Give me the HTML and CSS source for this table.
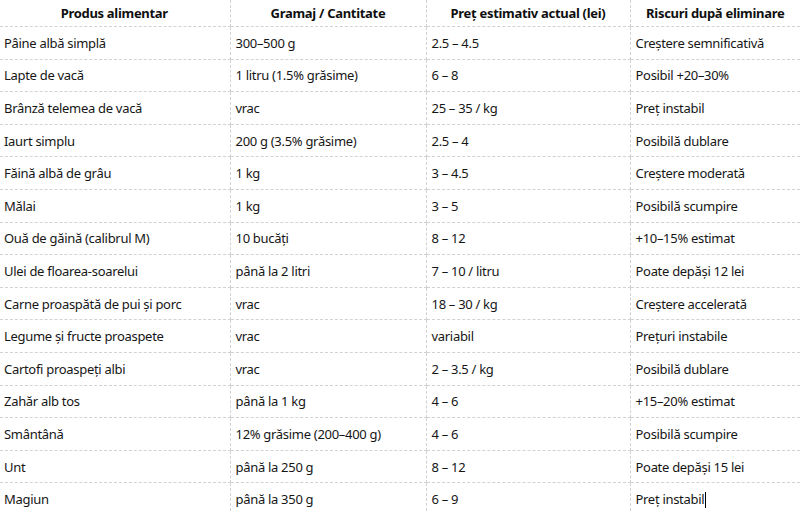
FILE: index.html
```html
<!DOCTYPE html>
<html lang="ro">
<head>
<meta charset="utf-8">
<title>Produse alimentare</title>
<link rel="stylesheet" href="styles.css">
</head>
<body>
<table class="grid">
  <colgroup>
    <col class="c1"><col class="c2"><col class="c3"><col class="c4">
  </colgroup>
  <thead>
    <tr><th>Produs alimentar</th><th>Gramaj / Cantitate</th><th>Preț estimativ actual (lei)</th><th>Riscuri după eliminare</th></tr>
  </thead>
  <tbody>
    <tr><td>Pâine albă simplă</td><td>300–500 g</td><td>2.5 – 4.5</td><td>Creștere semnificativă</td></tr>
    <tr><td>Lapte de vacă</td><td>1 litru (1.5% grăsime)</td><td>6 – 8</td><td>Posibil +20–30%</td></tr>
    <tr><td>Brânză telemea de vacă</td><td>vrac</td><td>25 – 35 / kg</td><td>Preț instabil</td></tr>
    <tr><td>Iaurt simplu</td><td>200 g (3.5% grăsime)</td><td>2.5 – 4</td><td>Posibilă dublare</td></tr>
    <tr><td>Făină albă de grâu</td><td>1 kg</td><td>3 – 4.5</td><td>Creștere moderată</td></tr>
    <tr><td>Mălai</td><td>1 kg</td><td>3 – 5</td><td>Posibilă scumpire</td></tr>
    <tr><td>Ouă de găină (calibrul M)</td><td>10 bucăți</td><td>8 – 12</td><td>+10–15% estimat</td></tr>
    <tr><td>Ulei de floarea-soarelui</td><td>până la 2 litri</td><td>7 – 10 / litru</td><td>Poate depăși 12 lei</td></tr>
    <tr><td>Carne proaspătă de pui și porc</td><td>vrac</td><td>18 – 30 / kg</td><td>Creștere accelerată</td></tr>
    <tr><td>Legume și fructe proaspete</td><td>vrac</td><td>variabil</td><td>Prețuri instabile</td></tr>
    <tr><td>Cartofi proaspeți albi</td><td>vrac</td><td>2 – 3.5 / kg</td><td>Posibilă dublare</td></tr>
    <tr><td>Zahăr alb tos</td><td>până la 1 kg</td><td>4 – 6</td><td>+15–20% estimat</td></tr>
    <tr><td>Smântână</td><td>12% grăsime (200–400 g)</td><td>4 – 6</td><td>Posibilă scumpire</td></tr>
    <tr><td>Unt</td><td>până la 250 g</td><td>8 – 12</td><td>Poate depăși 15 lei</td></tr>
    <tr><td>Magiun</td><td>până la 350 g</td><td>6 – 9</td><td>Preț instabil<span class="caret"></span></td></tr>
  </tbody>
</table>
</body>
</html>
```

FILE: styles.css
```css
html, body {
  margin: 0;
  padding: 0;
  background: #ffffff;
}
body {
  font-family: "Noto Sans", "Open Sans", "DejaVu Sans", sans-serif;
  font-size: 13px;
  letter-spacing: -0.3px;
  color: #161616;
  overflow: hidden;
}
.grid {
  width: 800px;
  table-layout: fixed;
  border-collapse: collapse;
}
.c1 { width: 230px; }
.c2 { width: 196px; }
.c3 { width: 204px; }
.c4 { width: 170px; }
.grid th,
.grid td {
  border: 1px dashed #d2d2d2;
  padding: 0 5px;
  white-space: nowrap;
  overflow: hidden;
  vertical-align: middle;
}
.grid tr > :first-child { border-left: none; padding-left: 4px; }
.grid tr > :last-child { border-right: none; }
.grid th {
  height: 26px;
  font-weight: 700;
  text-align: center;
  border-top: none;
  color: #0f0f0f;
}
.grid td {
  height: 31.6px;
  text-align: left;
}
.caret {
  display: inline-block;
  width: 1px;
  height: 16px;
  background: #000;
  vertical-align: middle;
  margin-left: 1px;
}
```
